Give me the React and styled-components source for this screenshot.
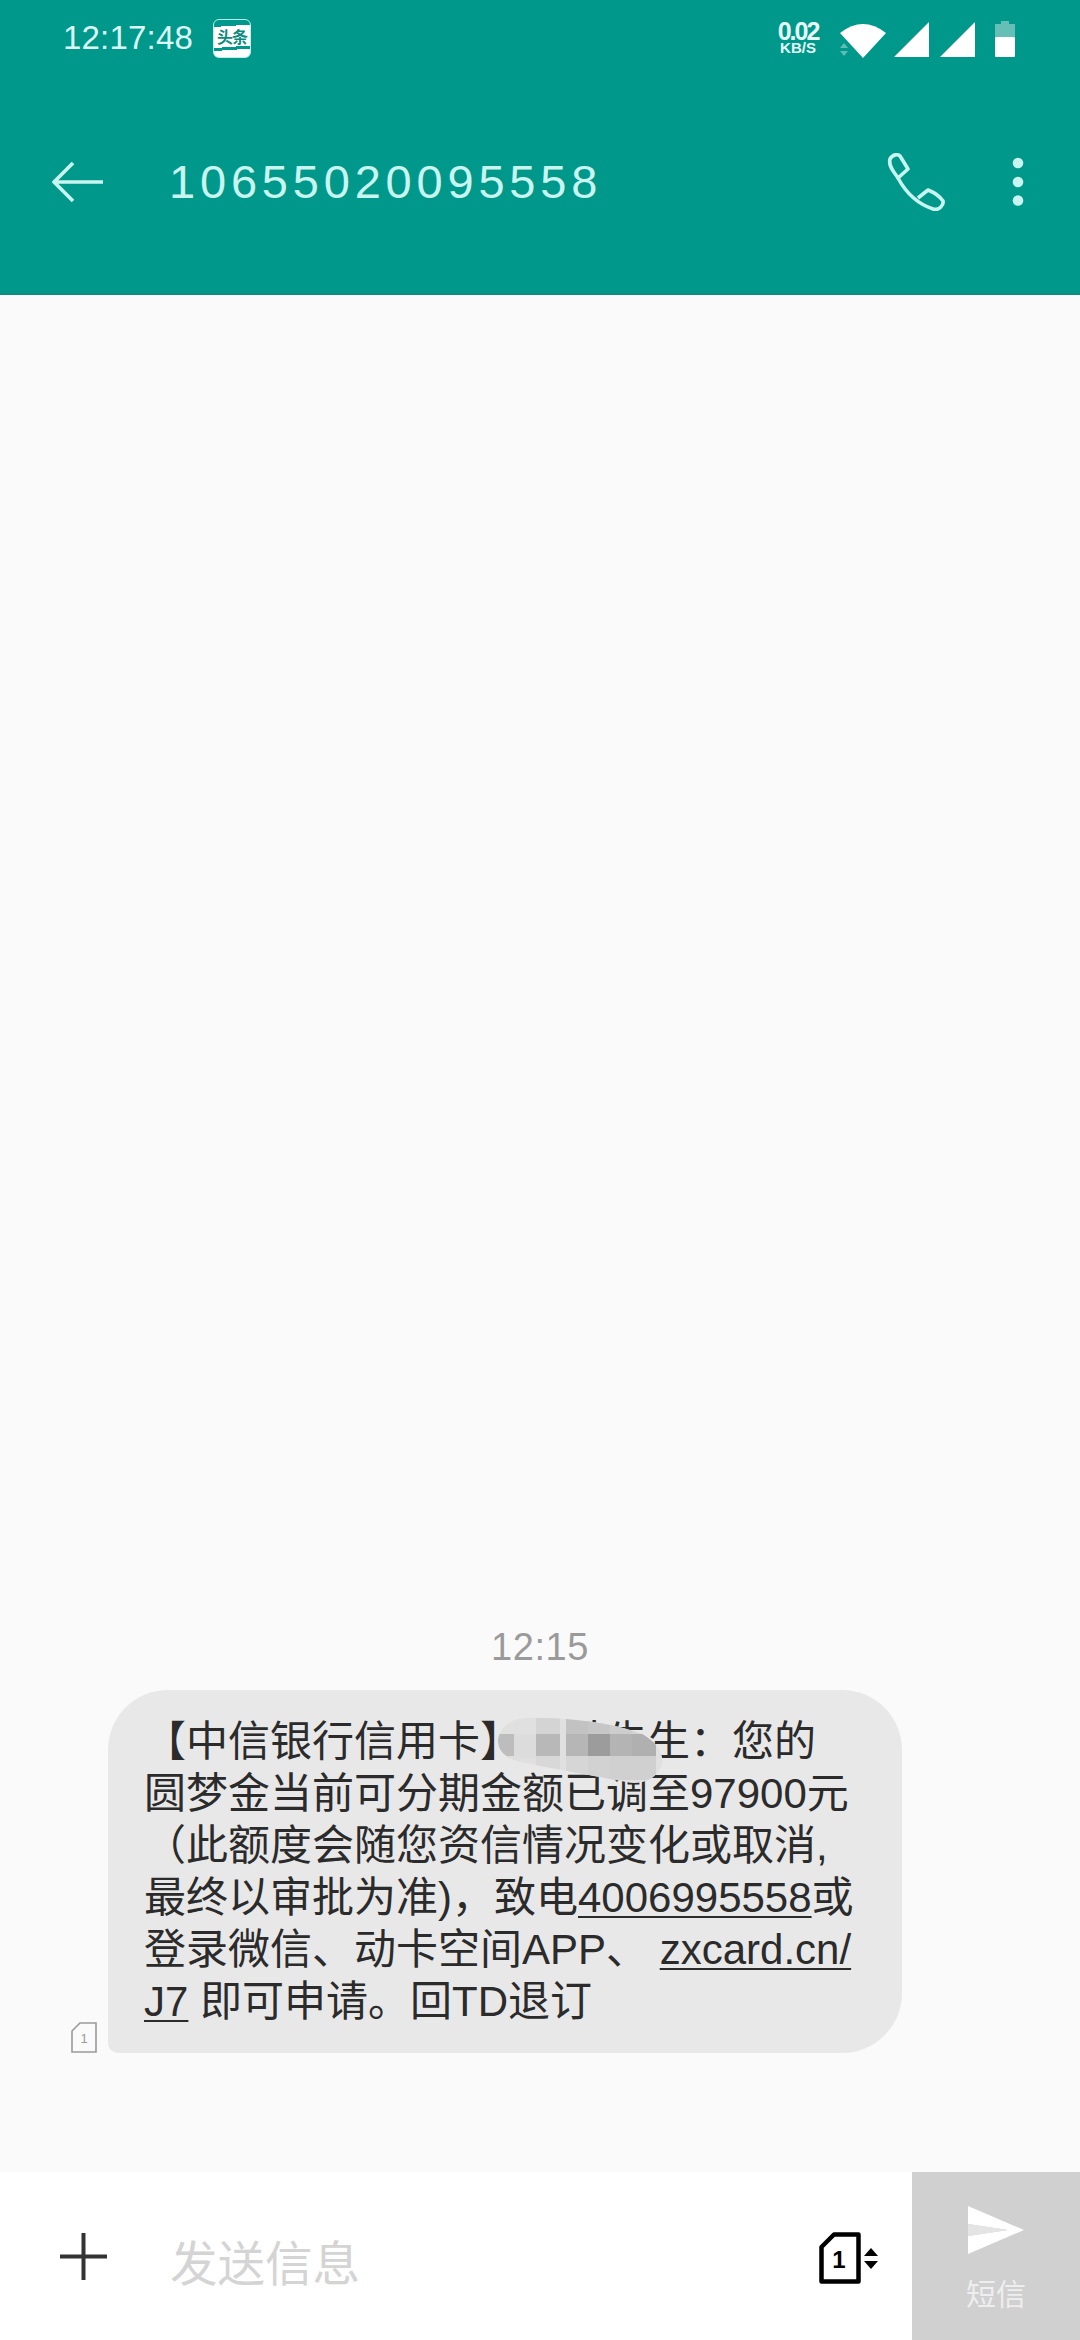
import styled, { createGlobalStyle } from "styled-components";

const GlobalStyle = createGlobalStyle`
  html, body {
    margin: 0;
    padding: 0;
    background: #fafafa;
  }
  * {
    box-sizing: border-box;
  }
`;

const fontStack = `"Liberation Sans", "Noto Sans CJK SC", sans-serif`;
const headerText = "#c9f5f0";

const Page = styled.div`
  width: 1080px;
  height: 2340px;
  display: flex;
  flex-direction: column;
  background: #fafafa;
  font-family: ${fontStack};
`;

const Header = styled.header`
  height: 295px;
  flex: none;
  display: flex;
  flex-direction: column;
  background: #00988a;
  border-bottom: 2px solid #118a7f;
`;

const StatusBar = styled.div`
  height: 80px;
  padding: 18px 65px 0 63px;
  display: flex;
  align-items: flex-start;
  justify-content: space-between;
`;

const StatusLeft = styled.div`
  display: flex;
  align-items: center;
  gap: 20px;
`;

const Clock = styled.span`
  font-size: 33px;
  line-height: 40px;
  letter-spacing: 0.2px;
  color: #dcfaf6;
`;

const AppBadge = styled.div`
  width: 38px;
  height: 39px;
  border: 1px solid #b8f0ea;
  border-radius: 6px;
  display: flex;
  align-items: center;
  justify-content: center;
  overflow: hidden;
  background: linear-gradient(176deg, #00988a 0 7px, #fff 7px 28px, #00988a 28px 31px, #fff 31px);
`;

const BadgeText = styled.span`
  font-family: "Noto Sans CJK SC", sans-serif;
  font-size: 16px;
  font-weight: 700;
  line-height: 16px;
  letter-spacing: -1px;
  margin-top: -4px;
  color: #0c8a7e;
`;

const StatusRight = styled.div`
  display: flex;
  align-items: flex-start;
`;

const Speed = styled.div`
  width: 52px;
  margin-top: 3px;
  margin-right: 15px;
  display: flex;
  flex-direction: column;
  align-items: center;
  color: #e6fbf8;
`;

const SpeedValue = styled.span`
  font-size: 25px;
  line-height: 20px;
  font-weight: 700;
  letter-spacing: -2px;
`;

const SpeedUnit = styled.span`
  font-size: 15px;
  line-height: 14px;
  font-weight: 700;
`;

const StatusIcon = styled.svg`
  display: block;
  flex: none;
  margin-top: ${(p) => p.$top || 5}px;
  margin-left: ${(p) => p.$left || 0}px;
`;

const Toolbar = styled.div`
  flex: 1;
  display: flex;
  align-items: center;
  padding: 0 56px 0 52px;
  padding-bottom: 10px;
`;

const ToolbarIcon = styled.svg`
  display: block;
  flex: none;
`;

const Title = styled.h1`
  margin: 0 0 0 65px;
  flex: 1;
  font-size: 47px;
  line-height: 54px;
  font-weight: 400;
  letter-spacing: 4.8px;
  color: ${headerText};
`;

const Actions = styled.div`
  display: flex;
  align-items: center;
  gap: 67px;
`;

const Thread = styled.main`
  flex: 1;
  display: flex;
  flex-direction: column;
  justify-content: flex-end;
  padding: 0 0 119px;
`;

const Timestamp = styled.div`
  margin-bottom: 20px;
  text-align: center;
  font-size: 38px;
  line-height: 46px;
  letter-spacing: 0.6px;
  color: #9a9a9a;
`;

const MessageRow = styled.div`
  display: flex;
  align-items: flex-end;
  padding-left: 71px;
`;

const SimMark = styled.svg`
  display: block;
  flex: none;
  margin: 0 10px 0 0;
  align-self: flex-end;
`;

const Bubble = styled.div`
  position: relative;
  width: 794px;
  height: 363px;
  padding: 26px 0 0 36px;
  background: #e8e8e8;
  border-radius: 60px 60px 60px 10px;
  font-size: 42px;
  line-height: 52px;
  color: #2b2b2b;
`;

const Line = styled.div`
  white-space: nowrap;
  height: 52px;
`;

const Link = styled.span`
  text-decoration: underline;
  text-decoration-thickness: 2px;
  text-underline-offset: 4px;
`;

const Mosaic = styled.svg`
  position: absolute;
  left: 388px;
  top: 22px;
`;

const Composer = styled.footer`
  height: 168px;
  flex: none;
  display: flex;
  align-items: stretch;
  background: #ffffff;
`;

const PlusButton = styled.div`
  width: 170px;
  flex: none;
  display: flex;
  align-items: center;
  padding-left: 60px;
`;

const Placeholder = styled.div`
  flex: 1;
  align-self: center;
  margin-top: 10px;
  font-family: "Noto Sans CJK SC", sans-serif;
  font-size: 47.5px;
  line-height: 60px;
  color: #d4d4d4;
`;

const SimPicker = styled.div`
  display: flex;
  align-items: center;
  gap: 3px;
  margin-right: 34px;
  padding-top: 4px;
`;

const SendButton = styled.div`
  width: 168px;
  flex: none;
  background: #d0d0d0;
  display: flex;
  flex-direction: column;
  align-items: center;
  padding-top: 34px;
`;

const SendLabel = styled.span`
  margin-top: 20px;
  font-family: "Noto Sans CJK SC", sans-serif;
  font-size: 30px;
  line-height: 36px;
  color: #eeeeee;
`;

const tiles = [
  [40, 0, "#d4d4d4"], [70, 0, "#c2c2c2"], [92, 0, "#c6c6c6"], [114, 0, "#cdcdcd"], [136, 0, "#d4d4d4"],
  [0, 22, "#bdbdbd"], [18, 22, "#dcdcdc"], [40, 22, "#b8b8b8"], [70, 22, "#b6b6b6"], [92, 22, "#9c9c9c"], [114, 22, "#b4b4b4"], [136, 22, "#b0b0b0"],
  [0, 44, "#dedede"], [40, 44, "#d8d8d8"], [70, 44, "#d6d6d6"], [92, 44, "#d2d2d2"], [114, 44, "#d0d0d0"], [136, 44, "#d0d0d0"],
];

const Blob = () => (
  <Mosaic width="170" height="75" viewBox="0 0 170 75">
    <defs>
      <clipPath id="blobClip">
        <path d="M2 28 C4 14 16 4 40 6 C80 6 120 12 146 22 C160 30 168 40 166 52 C162 66 146 74 130 70 C90 62 40 54 18 48 C8 44 2 38 2 28 Z" />
      </clipPath>
    </defs>
    <g clipPath="url(#blobClip)">
      <rect width="170" height="75" fill="#e0e0e0" />
      {tiles.map(([x, y, fill]) => (
        <rect key={`${x}-${y}`} x={x} y={y} width="24" height="24" fill={fill} />
      ))}
    </g>
  </Mosaic>
);

export default function App() {
  return (
    <Page>
      <GlobalStyle />
      <Header>
        <StatusBar>
          <StatusLeft>
            <Clock>12:17:48</Clock>
            <AppBadge>
              <BadgeText>头条</BadgeText>
            </AppBadge>
          </StatusLeft>
          <StatusRight>
            <Speed>
              <SpeedValue>0.02</SpeedValue>
              <SpeedUnit>KB/S</SpeedUnit>
            </Speed>
            <StatusIcon width="48" height="36" viewBox="0 0 48 36" $top={4}>
              <path d="M1 11 Q24 -7 47 11 L24 36 Z" fill="#fff" />
              <path d="M1 33 L5 28 L9 33 Z M1 36 L9 36 L5 41 Z" fill="#5fbdb3" transform="translate(0 -7)" />
            </StatusIcon>
            <StatusIcon width="36" height="35" viewBox="0 0 36 35" $top={4} $left={7}>
              <path d="M0 35 L35 0 L35 35 Z" fill="#fff" />
            </StatusIcon>
            <StatusIcon width="36" height="35" viewBox="0 0 36 35" $top={4} $left={10}>
              <path d="M0 35 L35 0 L35 35 Z" fill="#fff" />
            </StatusIcon>
            <StatusIcon width="20" height="36" viewBox="0 0 20 36" $top={3} $left={19}>
              <path d="M6 0 H14 V3 H20 V16 H0 V3 H6 Z" fill="#66bfb6" />
              <rect y="16" width="20" height="20" rx="1" fill="#fff" />
            </StatusIcon>
          </StatusRight>
        </StatusBar>
        <Toolbar>
          <ToolbarIcon width="52" height="40" viewBox="0 0 52 40" fill="none" stroke={headerText} strokeWidth="3.6">
            <path d="M2 20 H51 M21 1 L2 20 L21 39" />
          </ToolbarIcon>
          <Title>10655020095558</Title>
          <Actions>
            <ToolbarIcon width="58" height="58" viewBox="0 0 58 58" fill="none" stroke={headerText} strokeWidth="3.6" strokeLinejoin="round">
              <path d="M3 6 C6 1 11 1 13 3 L21 16 L11 25 C8 20 1 14 3 6 Z" />
              <path d="M11 25 C18 38 28 50 46 56 C52 58 57 52 56 48 C52 42 46 39 41 37 L31 45" />
            </ToolbarIcon>
            <ToolbarIcon width="12" height="50" viewBox="0 0 12 50" fill={headerText}>
              <circle cx="6" cy="6" r="5.3" />
              <circle cx="6" cy="25" r="5.3" />
              <circle cx="6" cy="43.5" r="5.3" />
            </ToolbarIcon>
          </Actions>
        </Toolbar>
      </Header>

      <Thread>
        <Timestamp>12:15</Timestamp>
        <MessageRow>
          <SimMark width="27" height="31" viewBox="0 0 27 31" fill="none" stroke="#9a9a9a" strokeWidth="1.6">
            <path d="M1 9 L9 1 H25 V30 H1 Z" />
            <text x="13" y="21" fontSize="13" fontFamily="Liberation Sans" fill="#9a9a9a" stroke="none" textAnchor="middle">1</text>
          </SimMark>
          <Bubble>
            <Line>【中信银行信用卡】某某先生：您的</Line>
            <Line>圆梦金当前可分期金额已调至97900元</Line>
            <Line>（此额度会随您资信情况变化或取消,</Line>
            <Line>最终以审批为准)，致电<Link>4006995558</Link>或</Line>
            <Line>登录微信、动卡空间APP、 <Link>zxcard.cn/</Link></Line>
            <Line><Link>J7</Link> 即可申请。回TD退订</Line>
            <Blob />
          </Bubble>
        </MessageRow>
      </Thread>

      <Composer>
        <PlusButton>
          <svg width="47" height="47" viewBox="0 0 47 47" stroke="#333" strokeWidth="4">
            <path d="M0 23.5 H47 M23.5 0 V47" />
          </svg>
        </PlusButton>
        <Placeholder>发送信息</Placeholder>
        <SimPicker>
          <svg width="42" height="52" viewBox="0 0 42 52" fill="none" stroke="#000" strokeWidth="4.5" strokeLinejoin="round">
            <path d="M2.5 15 L15 2.5 H39.5 V49.5 H2.5 Z" />
            <text x="20" y="36" fontSize="24" fontWeight="700" fontFamily="Liberation Sans" fill="#000" stroke="none" textAnchor="middle">1</text>
          </svg>
          <svg width="14" height="21" viewBox="0 0 14 21" fill="#000">
            <path d="M0 8 L7 0 L14 8 Z M0 13 H14 L7 21 Z" />
          </svg>
        </SimPicker>
        <SendButton>
          <svg width="56" height="48" viewBox="0 0 56 48" fill="#fff">
            <path d="M0 0 L56 24 L0 48 V30 L40 24 L0 18 Z" />
            <path d="M0 18 L40 24 L0 30 Z" fill="#e4e4e4" />
          </svg>
          <SendLabel>短信</SendLabel>
        </SendButton>
      </Composer>
    </Page>
  );
}
